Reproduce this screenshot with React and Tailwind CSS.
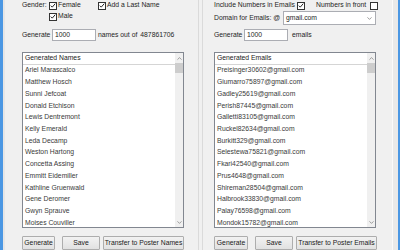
import { ChevronDown, ChevronUp } from 'lucide-react';

const names = [
  'Ariel Marascalco',
  'Matthew Hosch',
  'Sunni Jefcoat',
  'Donald Etchison',
  'Lewis Dentremont',
  'Kelly Emerald',
  'Leda Decamp',
  'Weston Hartong',
  'Concetta Assing',
  'Emmitt Eidemiller',
  'Kathline Gruenwald',
  'Gene Deromer',
  'Gwyn Sprauve',
  'Moises Couviller',
];

const emails = [
  'Preisinger30602@gmail.com',
  'Giumarro75897@gmail.com',
  'Gadley25619@gmail.com',
  'Perish87445@gmail.com',
  'Galletti83105@gmail.com',
  'Ruckel82634@gmail.com',
  'Burkitt329@gmail.com',
  'Selestewa75821@gmail.com',
  'Fkari42540@gmail.com',
  'Prus4648@gmail.com',
  'Shireman28504@gmail.com',
  'Halbrook33830@gmail.com',
  'Palay76598@gmail.com',
  'Mondok15782@gmail.com',
];

function Check({ checked }) {
  return (
    <span className="flex h-[8px] w-[8px] shrink-0 items-center justify-center border border-[#333] bg-white">
      {checked && (
        <svg viewBox="0 0 8 8" className="h-[7px] w-[7px]">
          <path d="M1 4.2 L3 6.2 L7 1.5" fill="none" stroke="#222" strokeWidth="1.3" />
        </svg>
      )}
    </span>
  );
}

function Field({ value, width }) {
  return (
    <div className={`flex h-[12px] shrink-0 items-center border border-[#abadb3] bg-white pl-[2px] ${width}`}>
      {value}
    </div>
  );
}

function ListBox({ title, items }) {
  return (
    <div className="flex h-[176px] w-[162px] border border-[#828790] bg-white">
      <div className="flex min-w-0 flex-1 flex-col overflow-hidden">
        <div className="flex h-[12px] shrink-0 items-center border-b border-[#d5d5d5] pl-[2px] text-[#1a1a1a]">
          {title}
        </div>
        {items.map((item) => (
          <div key={item} className="flex h-[11.72px] shrink-0 items-center pl-[2px] text-[#3a3a3a]">
            {item}
          </div>
        ))}
      </div>
      <div className="flex w-[8px] flex-col bg-[#f0f0f0]">
        <div className="flex h-[10px] items-center justify-center text-[#606060]">
          <ChevronUp size={7} strokeWidth={2} />
        </div>
        <div className="h-[10px] bg-[#cdcdcd]" />
        <div className="flex-1" />
        <div className="flex h-[10px] items-center justify-center text-[#606060]">
          <ChevronDown size={7} strokeWidth={2} />
        </div>
      </div>
    </div>
  );
}

function Button({ children, width }) {
  return (
    <button className={`flex h-[14px] shrink-0 items-center justify-center rounded-[1px] border border-[#adadad] bg-gradient-to-b from-[#f2f2f2] to-[#e1e1e1] text-[#1a1a1a] ${width}`}>
      {children}
    </button>
  );
}

export default function App() {
  return (
    <div className="flex h-[250px] w-[400px] overflow-hidden whitespace-nowrap bg-[#f0f0f0] font-['Liberation_Sans',Arial,sans-serif] text-[6.8px] leading-none text-[#1e1e1e]">
      <div className="w-[3px] shrink-0 bg-[#4b97e3]" />
      <div className="w-[2px] shrink-0 bg-[#e6e6e6]" />

      <div className="flex w-[193px] shrink-0 flex-col pl-[17px]">
        <div className="flex h-[11px] items-center">
          <span className="w-[27px] shrink-0">Gender:</span>
          <span className="flex w-[49px] shrink-0 items-center gap-[1px]">
            <Check checked />
            <span>Female</span>
          </span>
          <span className="flex items-center gap-[1px]">
            <Check checked />
            <span>Add a Last Name</span>
          </span>
        </div>
        <div className="flex h-[11px] items-center pl-[27px]">
          <span className="flex items-center gap-[1px]">
            <Check checked />
            <span>Male</span>
          </span>
        </div>
        <div className="mt-[7px] flex items-center">
          <span className="w-[30px] shrink-0">Generate</span>
          <Field value="1000" width="w-[44px]" />
          <span className="ml-[2px]">names out of</span>
          <span className="ml-[3px]">487861706</span>
        </div>
        <div className="mt-[11px]">
          <ListBox title="Generated Names" items={names} />
        </div>
        <div className="mt-[8px] flex gap-[7px]">
          <Button width="w-[33px]">Generate</Button>
          <div className="flex gap-[3px]">
            <Button width="w-[38px]">Save</Button>
            <Button width="w-[81px]">Transfer to Poster Names</Button>
          </div>
        </div>
      </div>

      <div className="w-[5px] shrink-0 border-x border-[#dadada]" />

      <div className="flex w-[189px] shrink-0 flex-col pl-[11px]">
        <div className="flex h-[11px] items-center">
          <span className="w-[83px] shrink-0">Include Numbers in Emails</span>
          <Check checked />
          <span className="ml-[11px] w-[54px] shrink-0">Numbers in front</span>
          <Check />
        </div>
        <div className="flex h-[14px] items-center">
          <span className="w-[69px] shrink-0">Domain for Emails: @</span>
          <div className="flex h-[14px] w-[93px] shrink-0 items-center justify-between border border-[#abadb3] bg-white pl-[2px] pr-[2px]">
            <span>gmail.com</span>
            <ChevronDown size={7} strokeWidth={2} className="text-[#555]" />
          </div>
        </div>
        <div className="mt-[4px] flex items-center">
          <span className="w-[30px] shrink-0">Generate</span>
          <Field value="1000" width="w-[44px]" />
          <span className="ml-[4px]">emails</span>
        </div>
        <div className="mt-[11px]">
          <ListBox title="Generated Emails" items={emails} />
        </div>
        <div className="mt-[8px] flex gap-[7px]">
          <Button width="w-[34px]">Generate</Button>
          <div className="flex gap-[3px]">
            <Button width="w-[38px]">Save</Button>
            <Button width="w-[81px]">Transfer to Poster Emails</Button>
          </div>
        </div>
      </div>

      <div className="w-[1px] shrink-0 bg-[#fafafa]" />
      <div className="w-[5px] shrink-0 bg-[#e9e9e9]" />
      <div className="w-[2px] shrink-0 bg-[#4b97e3]" />
    </div>
  );
}
